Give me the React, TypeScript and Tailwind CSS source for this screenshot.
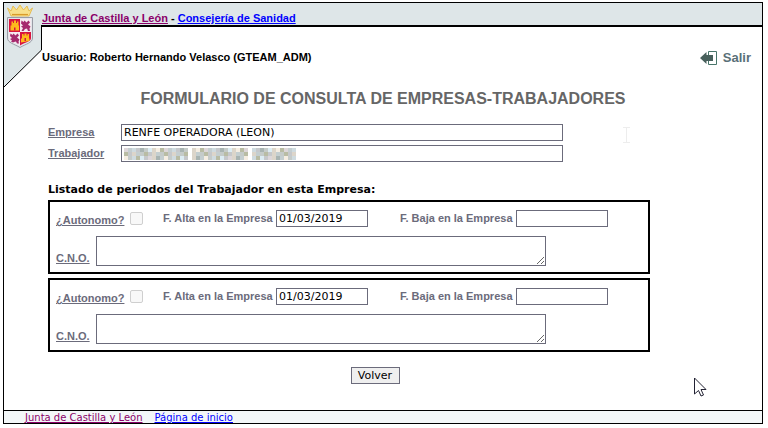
import React, { useId } from "react";

type Period = {
  start: string;
  end: string;
};

const periods: Period[] = [
  { start: "01/03/2019", end: "" },
  { start: "01/03/2019", end: "" },
];

const label = "font-['Liberation_Sans',sans-serif] text-[11px] leading-4 font-bold text-[#6b6b7b]";
const field =
  "block h-[17px] border border-[#6b6b7b] bg-white px-[2px] font-['DejaVu_Sans',sans-serif] text-[11px] leading-[15px] text-black outline-none";

// [x, y, colour] cells of the masked name, 4px squares
const mask: [number, number, string][] = [];
const tones = ["#ddd6d9", "#c6c8cb", "#dcecf3", "#b9bca4", "#cfdbe0", "#c5cbc9", "#f5ede2", "#c4ced0", "#a9b4b2", "#dcd5ca"];
for (let x = 0; x < 43; x++) {
  if (x === 16 || x === 31) continue;
  for (let y = 0; y < 3; y++) {
    mask.push([x * 4, y * 4, tones[(x * 7 + y * 3 + x * y) % 10]]);
  }
}

function Crest() {
  return (
    <svg viewBox="0 0 28 44" className="h-11 w-7" aria-label="Escudo de Castilla y León" role="img">
      <path d="M5 12 1.500 4 5 7l2-5 3.500 4L14 1l3.500 5L21 2l2 5 3.500-3L23 12z" fill="#f8e08a" stroke="#e3b23c" strokeWidth="0.8" />
      <path d="M6 10.500h16" stroke="#d99b2b" strokeWidth="1.200" />
      <path d="M1.500 13.500h25V34c0 5-7 6-12.500 9.500C8.500 40 1.500 39 1.500 34z" fill="#e4e6ea" stroke="#9a9ca6" />
      <path d="M3 15h11v13H3z" fill="#d9143f" />
      <path d="M14 15h11v13H14z" fill="#f6e9ef" />
      <path d="M3 28h11v13.500C8 38 3 37.500 3 34z" fill="#f6e9ef" />
      <path d="M14 28h11v6c0 3.500-5 4-11 7.500z" fill="#d9143f" />
      <path d="M4.500 26.500v-5h1v-4h1.500v1.500h1V16.500h2v2.500h1v-1.500H12.500v4h.5v5zM15 38.500v-4h1v-4.500h1.500v1.500h1V29.500h2v2h1V30H23v4.500h.5v2.500z" fill="#fdbb1c" />
      <path d="M8 26.500v-3h1.500v3zM18.500 37v-3H20v3z" fill="#d9143f" />
      <path
        d="M15.500 16.500l2 1.500 1-1.500 2 2 2-2 1.500 2-2 2 2.500 2-1 2 .5 2.500h-2l-1-2.500-2 .5-1.500 2h-2l1.500-3-2-1.500 2-1-2-2zM4.500 29.500l2 1.500 1-1.500 2 2 2-2 1.500 2-2 2 2.500 2-1 2 .5 2h-2l-1-2-2 .5-1 .5-2-1 1-1-2-1.500 2-1-2-2z"
        fill="#a62a6e"
      />
    </svg>
  );
}

function PeriodBox({ start, end }: Period) {
  const id = useId();
  return (
    <section className="h-[74px] border-2 border-black px-1.5 pt-1.5">
      <div className="flex items-center">
        <label htmlFor={`${id}-auto`} className={`${label} w-[74px] pt-1 underline`}>¿Autonomo?</label>
        <input
          id={`${id}-auto`}
          type="checkbox"
          disabled
          className="size-[13px] appearance-none rounded-[2px] border border-[#cfcfcf] bg-[#f8f8f8]"
        />
        <label htmlFor={`${id}-start`} className={`${label} ml-5 w-[113px]`}>F. Alta en la Empresa</label>
        <input id={`${id}-start`} defaultValue={start} className={`${field} w-[92px]`} />
        <label htmlFor={`${id}-end`} className={`${label} ml-8 w-[116px]`}>F. Baja en la Empresa</label>
        <input id={`${id}-end`} defaultValue={end} className={`${field} w-[92px]`} />
      </div>
      <div className="mt-2 flex items-end">
        <label htmlFor={`${id}-cno`} className={`${label} w-10 underline`}>C.N.O.</label>
        <textarea id={`${id}-cno`} className="block h-[30px] w-[450px] resize border border-[#6b6b7b] bg-white outline-none" />
      </div>
    </section>
  );
}

export default function App() {
  return (
    <div className="bg-white pt-0.5 pr-[5px] pb-1 pl-[3px]">
      <div className="relative border border-black">
        <header className="flex h-6 items-end border-b-2 border-black bg-[#dee6e8] pl-[38px] font-['Liberation_Sans',sans-serif] text-[11px] leading-[13px] font-bold">
          <p>
            <a href="#" className="text-[#8b0069] underline">Junta de Castilla y León</a>
            {" - "}
            <a href="#" className="text-[#0000ff] underline">Consejería de Sanidad</a>
          </p>
        </header>

        {/* slanted corner that hangs from the header and holds the crest */}
        <div className="absolute top-0 left-0">
          <svg viewBox="0 0 38 84" className="block h-[84px] w-[38px]">
            <path d="M0 0H38V47L0 84z" fill="#dee6e8" />
            <path d="M37.500 22V47L0 84" fill="none" stroke="#000" />
          </svg>
          <div className="absolute top-px left-0.5">
            <Crest />
          </div>
        </div>

        <div className="flex h-[62px] items-center justify-between pr-[11px] pl-[38px]">
          <p className="pb-0.5 font-['Liberation_Sans',sans-serif] text-[11px] leading-4 font-bold text-black">
            Usuario: Roberto Hernando Velasco (GTEAM_ADM)
          </p>
          <a href="#" className="flex items-center gap-1.5 font-['Liberation_Sans',sans-serif] text-[13px] leading-4 font-bold text-[#5a7078]">
            <svg viewBox="0 0 17 14" className="h-3.5 w-[17px]">
              <path d="M8.500.5h8v13h-8z" fill="#fff" stroke="#48756a" />
              <path d="M0 7l6.500-6v3H13v6H6.500v3z" fill="#48605c" />
            </svg>
            Salir
          </a>
        </div>

        <main>
          <h1 className="text-center font-['Liberation_Sans',sans-serif] text-base leading-5 font-bold text-[#666]">
            FORMULARIO DE CONSULTA DE EMPRESAS-TRABAJADORES
          </h1>
          <div className="mt-[15px] ml-11 w-[602px]">
            <div className="flex flex-col gap-1">
              <div className="flex">
                <label htmlFor="empresa" className={`${label} w-[73px] underline`}>Empresa</label>
                <input id="empresa" defaultValue="RENFE OPERADORA (LEON)" className={`${field} w-[442px]`} />
              </div>
              <div className="flex">
                <label htmlFor="trabajador" className={`${label} w-[73px] underline`}>Trabajador</label>
                <div className="relative">
                  <input id="trabajador" className={`${field} w-[442px]`} />
                  <svg viewBox="0 0 174 12" className="pointer-events-none absolute top-[3px] left-[3px] h-3 w-[174px]">
                    {mask.map(([x, y, fill]) => (
                      <rect key={`${x}-${y}`} x={x} y={y} width="4" height="4" fill={fill} />
                    ))}
                  </svg>
                </div>
              </div>
            </div>

            <h2 className="mt-5 mb-0.5 font-['DejaVu_Sans',sans-serif] text-[11px] leading-4 font-bold text-black">
              Listado de periodos del Trabajador en esta Empresa:
            </h2>
            <div className="flex flex-col gap-1">
              {periods.map((p, i) => (
                <PeriodBox key={i} {...p} />
              ))}
            </div>
          </div>
          <div className="flex justify-center pt-[15px] pr-4 pb-[26px]">
            <button type="button" className="h-[17px] w-[49px] border border-[#6b6b7b] bg-[#efefef] font-['DejaVu_Sans',sans-serif] text-[11px] leading-[15px] text-black">
              Volver
            </button>
          </div>
        </main>

        <footer className="flex h-[13px] gap-3 border-t border-black bg-[#f3f7f8] pl-[21px] font-['DejaVu_Sans',sans-serif] text-[10px] leading-[13px]">
          <a href="#" className="text-[#8b0069] underline">Junta de Castilla y León</a>
          <a href="#" className="text-[#0000ff] underline">Página de inicio</a>
        </footer>

        {/* pointers */}
        <svg viewBox="0 0 9 16" className="pointer-events-none absolute top-[124px] right-[131px] h-4 w-[9px]">
          <path d="M1 .5h7M1 15.500h7M4.500.5v15" fill="none" stroke="#ededed" />
        </svg>
        <svg viewBox="0 0 13 20" className="pointer-events-none absolute right-[55px] bottom-[26px] h-5 w-[13px]">
          <path d="M.5 1v16l4-3.500 2.500 5.500 2.500-1-2.500-5.500h5z" fill="#fff" stroke="#223" />
        </svg>
      </div>
    </div>
  );
}
